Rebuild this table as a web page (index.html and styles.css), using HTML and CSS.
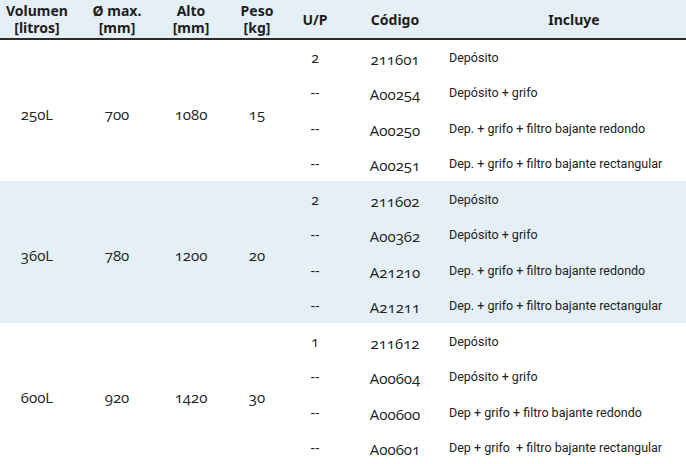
FILE: index.html
```html
<!DOCTYPE html>
<html lang="es">
<head>
<meta charset="utf-8">
<link rel="stylesheet" href="styles.css">
</head>
<body>
<table class="spec">
  <colgroup>
    <col class="c-vol"><col class="c-dia"><col class="c-alto"><col class="c-peso"><col class="c-up"><col class="c-cod"><col class="c-inc">
  </colgroup>
  <thead>
    <tr>
      <th><span class="hl">Volumen</span><span class="hl">[litros]</span></th>
      <th><span class="hl">Ø max.</span><span class="hl">[mm]</span></th>
      <th><span class="hl">Alto</span><span class="hl">[mm]</span></th>
      <th><span class="hl">Peso</span><span class="hl">[kg]</span></th>
      <th>U/P</th>
      <th class="h-cod">Código</th>
      <th class="h-inc">Incluye</th>
    </tr>
  </thead>
  <tbody class="grp first">
    <tr class="r1">
      <td class="big" rowspan="4">250L</td>
      <td class="big" rowspan="4">700</td>
      <td class="big" rowspan="4">1080</td>
      <td class="big" rowspan="4">15</td>
      <td class="up">2</td><td class="cod">211601</td><td class="inc">Depósito</td>
    </tr>
    <tr class="r2"><td class="up">--</td><td class="cod">A00254</td><td class="inc">Depósito + grifo</td></tr>
    <tr class="r3"><td class="up">--</td><td class="cod">A00250</td><td class="inc">Dep. + grifo + filtro bajante redondo</td></tr>
    <tr class="r4"><td class="up">--</td><td class="cod">A00251</td><td class="inc">Dep. + grifo + filtro bajante rectangular</td></tr>
  </tbody>
  <tbody class="grp alt">
    <tr class="r1">
      <td class="big" rowspan="4">360L</td>
      <td class="big" rowspan="4">780</td>
      <td class="big" rowspan="4">1200</td>
      <td class="big" rowspan="4">20</td>
      <td class="up">2</td><td class="cod">211602</td><td class="inc">Depósito</td>
    </tr>
    <tr class="r2"><td class="up">--</td><td class="cod">A00362</td><td class="inc">Depósito + grifo</td></tr>
    <tr class="r3"><td class="up">--</td><td class="cod">A21210</td><td class="inc">Dep. + grifo + filtro bajante redondo</td></tr>
    <tr class="r4"><td class="up">--</td><td class="cod">A21211</td><td class="inc">Dep. + grifo + filtro bajante rectangular</td></tr>
  </tbody>
  <tbody class="grp">
    <tr class="r1">
      <td class="big" rowspan="4">600L</td>
      <td class="big" rowspan="4">920</td>
      <td class="big" rowspan="4">1420</td>
      <td class="big" rowspan="4">30</td>
      <td class="up">1</td><td class="cod">211612</td><td class="inc">Depósito</td>
    </tr>
    <tr class="r2"><td class="up">--</td><td class="cod">A00604</td><td class="inc">Depósito + grifo</td></tr>
    <tr class="r3"><td class="up">--</td><td class="cod">A00600</td><td class="inc">Dep + grifo + filtro bajante redondo</td></tr>
    <tr class="r4"><td class="up">--</td><td class="cod">A00601</td><td class="inc">Dep + grifo&nbsp; + filtro bajante rectangular</td></tr>
  </tbody>
</table>
</body>
</html>
```
FILE: styles.css
```css
html, body {
  margin: 0;
  padding: 0;
  background: #ffffff;
}

.spec {
  width: 686px;
  border-collapse: collapse;
  table-layout: fixed;
  color: #222222;
  font-family: "Open Sans", "Noto Sans", sans-serif;
}

.c-vol { width: 74px; }
.c-dia { width: 86px; }
.c-alto { width: 62px; }
.c-peso { width: 70px; }
.c-up { width: 46px; }
.c-cod { width: 102px; }
.c-inc { width: 246px; }

.spec th {
  background: #e5eff6;
  height: 38px;
  padding: 0;
  border-bottom: 2px solid #2b2b2b;
  font-family: "Noto Sans", sans-serif;
  font-weight: 700;
  font-size: 14px;
  line-height: 17px;
  text-align: center;
  vertical-align: middle;
  color: #1e1e1e;
}

.hl {
  display: block;
  height: 17px;
  line-height: 17px;
}

.spec th.h-cod { padding-left: 12px; }
.spec th.h-inc { padding-left: 22px; }

.spec td {
  padding: 0;
  text-align: center;
  vertical-align: middle;
}

.grp.alt td { background: #e5eff6; }

.grp tr.r1 { height: 36px; }
.grp tr.r2 { height: 35px; }
.grp tr.r3 { height: 36px; }
.grp tr.r4 { height: 35px; }

.grp.first tr.r1 td {
  border-top: 1px solid #eef2f5;
}

.big, .up, .cod {
  font-size: 15px;
  font-variant-numeric: oldstyle-nums;
  font-feature-settings: "onum" 1;
}

.big { padding-top: 6px !important; }

.up { font-size: 14px; }

.cod { padding-left: 12px !important; padding-top: 3px !important; }

.inc {
  text-align: left !important;
  padding-left: 9px !important;
  font-family: "Roboto", sans-serif;
  font-size: 12.5px;
  white-space: nowrap;
}
```
